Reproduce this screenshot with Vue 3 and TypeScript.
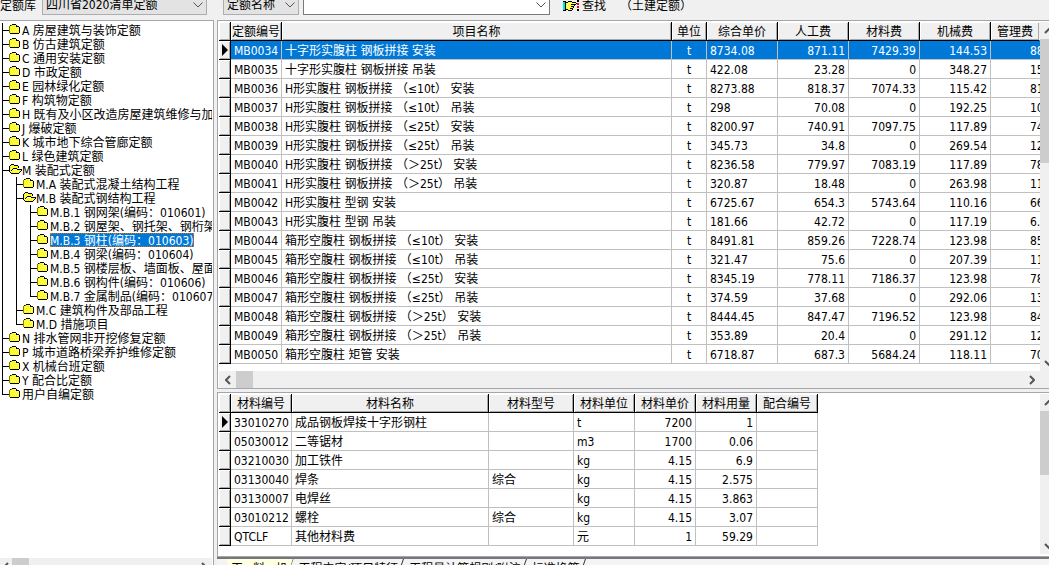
<script setup lang="ts">
import { ref } from 'vue'

interface TreeNode {
  label: string
  level: number
  open?: boolean
  last?: boolean
}

const tree: TreeNode[] = [
  { label: 'A 房屋建筑与装饰定额', level: 0 },
  { label: 'B 仿古建筑定额', level: 0 },
  { label: 'C 通用安装定额', level: 0 },
  { label: 'D 市政定额', level: 0 },
  { label: 'E 园林绿化定额', level: 0 },
  { label: 'F 构筑物定额', level: 0 },
  { label: 'H 既有及小区改造房屋建筑维修与加固', level: 0 },
  { label: 'J 爆破定额', level: 0 },
  { label: 'K 城市地下综合管廊定额', level: 0 },
  { label: 'L 绿色建筑定额', level: 0 },
  { label: 'M 装配式定额', level: 0, open: true },
  { label: 'M.A 装配式混凝土结构工程', level: 1 },
  { label: 'M.B 装配式钢结构工程', level: 1, open: true },
  { label: 'M.B.1 钢网架(编码：010601)', level: 2 },
  { label: 'M.B.2 钢屋架、钢托架、钢桁架', level: 2 },
  { label: 'M.B.3 钢柱(编码：010603)', level: 2 },
  { label: 'M.B.4 钢梁(编码：010604)', level: 2 },
  { label: 'M.B.5 钢楼层板、墙面板、屋面板', level: 2 },
  { label: 'M.B.6 钢构件(编码：010606)', level: 2 },
  { label: 'M.B.7 金属制品(编码：010607)', level: 2, last: true },
  { label: 'M.C 建筑构件及部品工程', level: 1 },
  { label: 'M.D 措施项目', level: 1, last: true },
  { label: 'N 排水管网非开挖修复定额', level: 0 },
  { label: 'P 城市道路桥梁养护维修定额', level: 0 },
  { label: 'X 机械台班定额', level: 0 },
  { label: 'Y 配合比定额', level: 0 },
  { label: '用户自编定额', level: 0, last: true },
]

const quotaHeads = ['定额编号', '项目名称', '单位', '综合单价', '人工费', '材料费', '机械费', '管理费']
const quotas: string[][] = [
  ['MB0034', '十字形实腹柱 钢板拼接 安装', 't', '8734.08', '871.11', '7429.39', '144.53', '88'],
  ['MB0035', '十字形实腹柱 钢板拼接 吊装', 't', '422.08', '23.28', '0', '348.27', '15'],
  ['MB0036', 'H形实腹柱 钢板拼接 （≤10t） 安装', 't', '8273.88', '818.37', '7074.33', '115.42', '81'],
  ['MB0037', 'H形实腹柱 钢板拼接 （≤10t） 吊装', 't', '298', '70.08', '0', '192.25', '10'],
  ['MB0038', 'H形实腹柱 钢板拼接 （≤25t） 安装', 't', '8200.97', '740.91', '7097.75', '117.89', '74'],
  ['MB0039', 'H形实腹柱 钢板拼接 （≤25t） 吊装', 't', '345.73', '34.8', '0', '269.54', '12'],
  ['MB0040', 'H形实腹柱 钢板拼接 （＞25t） 安装', 't', '8236.58', '779.97', '7083.19', '117.89', '78'],
  ['MB0041', 'H形实腹柱 钢板拼接 （＞25t） 吊装', 't', '320.87', '18.48', '0', '263.98', '11'],
  ['MB0042', 'H形实腹柱 型钢 安装', 't', '6725.67', '654.3', '5743.64', '110.16', '66'],
  ['MB0043', 'H形实腹柱 型钢 吊装', 't', '181.66', '42.72', '0', '117.19', '6.'],
  ['MB0044', '箱形空腹柱 钢板拼接 （≤10t） 安装', 't', '8491.81', '859.26', '7228.74', '123.98', '85'],
  ['MB0045', '箱形空腹柱 钢板拼接 （≤10t） 吊装', 't', '321.47', '75.6', '0', '207.39', '11'],
  ['MB0046', '箱形空腹柱 钢板拼接 （≤25t） 安装', 't', '8345.19', '778.11', '7186.37', '123.98', '78'],
  ['MB0047', '箱形空腹柱 钢板拼接 （≤25t） 吊装', 't', '374.59', '37.68', '0', '292.06', '13'],
  ['MB0048', '箱形空腹柱 钢板拼接 （＞25t） 安装', 't', '8444.45', '847.47', '7196.52', '123.98', '84'],
  ['MB0049', '箱形空腹柱 钢板拼接 （＞25t） 吊装', 't', '353.89', '20.4', '0', '291.12', '12'],
  ['MB0050', '箱形空腹柱 矩管 安装', 't', '6718.87', '687.3', '5684.24', '118.11', '70'],
]

const materialHeads = ['材料编号', '材料名称', '材料型号', '材料单位', '材料单价', '材料用量', '配合编号']
const materials: string[][] = [
  ['33010270', '成品钢板焊接十字形钢柱', '', 't', '7200', '1', ''],
  ['05030012', '二等锯材', '', 'm3', '1700', '0.06', ''],
  ['03210030', '加工铁件', '', 'kg', '4.15', '6.9', ''],
  ['03130040', '焊条', '综合', 'kg', '4.15', '2.575', ''],
  ['03130007', '电焊丝', '', 'kg', '4.15', '3.863', ''],
  ['03010212', '螺栓', '综合', 'kg', '4.15', '3.07', ''],
  ['QTCLF', '其他材料费', '', '元', '1', '59.29', ''],
]

const tabs = ['工   料   机', '工程内容/项目特征', '工程量计算规则/附注', '标准换算']

const selectedNode = ref(15)
const selectedQuota = ref(0)
const selectedMaterial = ref(0)
const activeTab = ref(0)
const keyword = ref('')
</script>

<template>
  <div class="window">
    <header class="toolbar">
      <label class="lib-label" for="library">定额库</label>
      <span class="combo combo-lib">
        <select id="library"><option>四川省2020清单定额</option></select>
        <svg class="chev" viewBox="0 0 10 6"><path d="M.5.5 5 5 9.500.5" /></svg>
      </span>
      <span class="combo combo-field">
        <select aria-label="查找字段"><option>定额名称</option></select>
        <svg class="chev" viewBox="0 0 10 6"><path d="M.5.5 5 5 9.500.5" /></svg>
      </span>
      <span class="combo combo-key">
        <input v-model="keyword" type="text" aria-label="查找内容" />
        <svg class="chev" viewBox="0 0 10 6"><path d="M.5.5 5 5 9.500.5" /></svg>
      </span>
      <button class="find" type="button">
        <svg class="hand" viewBox="0 0 17 12" shape-rendering="crispEdges">
          <path fill="#00e0e0" d="M0 2h2v8H0z" />
          <path fill="#000" d="M0 1h3v1H0zM0 10h3v1H0zM2 2h1v8H2z" />
          <path fill="#ffff30" d="M3 3h2V2h4v1h4v1H9v1h2v1h-1v2h-1v2H5V9H3z" />
          <path fill="#fff" d="M4 4h1v1H4zM6 3h1v1H6zM4 6h1v1H4zM6 5h1v1H6zM6 7h1v1H6zM8 3h1v1H8zM10 3h1v1h-1z" />
          <path fill="#000" d="M3 2h2v1H3zM5 1h4v1H5zM9 2h4v1H9zM13 3h1v1h-1zM8 4h5v1H8zM11 5h1v1h-1zM8 6h3v1H8zM10 7h1v1h-1zM7 8h3v1H7zM9 9h1v1H9zM5 10h4v1H5zM3 9h2v1H3z" />
          <path fill="#000" d="M14 0h2v2h-2zM14 9h2v2h-2z" />
          <path fill="#e00" d="M14 3h2v2h-2zM14 6h2v2h-2z" />
        </svg>
        查找
      </button>
      <span class="scope">（土建定额）</span>
    </header>

    <main class="body">
      <aside class="side">
        <ul class="tree">
          <li
            v-for="(n, i) in tree"
            :key="n.label"
            :class="['node', { selected: i === selectedNode, last: n.last }]"
            @click="selectedNode = i"
          >
            <span v-for="k in n.level" :key="k" class="rail"></span>
            <span class="branch"></span>
            <svg v-if="n.open" class="folder" viewBox="0 0 13 12">
              <path fill="#ff0" d="M1 3h1V2h3v1h4v3H3v1H2v2H1zM4 7h8v1h-1v1h-1v1H2V9h1V8h1z" />
              <path fill="#fff" d="M2 3h1v1H2zM4 4h1v1H4zM6 4h1v1H6zM2 5h1v1H2zM5 8h1v1H5zM7 7h1v1H7zM9 8h1v1H9z" />
              <path
                fill="#000"
                d="M2 1h3v1H2zM1 2h1v1H1zM5 2h4v1H5zM9 3h1v2H9zM0 3h1v6H0zM4 5h4v1H4zM3 6h1v1H3zM8 6h5v1H8zM2 7h1v1H2zM12 7h1v1h-1zM11 8h1v1h-1zM1 9h1v1H1zM10 9h1v1h-1zM2 10h8v1H2z"
              />
            </svg>
            <svg v-else class="folder" viewBox="0 0 13 12">
              <path fill="#ff0" d="M1 3h9v7H1zM3 2h3v1H3z" />
              <path
                fill="#fff"
                d="M2 4h1v1H2zM4 4h1v1H4zM6 4h1v1H6zM8 4h1v1H8zM3 6h1v1H3zM5 6h1v1H5zM7 6h1v1H7zM9 6h1v1H9zM2 8h1v1H2zM4 8h1v1H4zM6 8h1v1H6zM8 8h1v1H8z"
              />
              <path fill="#808000" d="M2 2h1v1H2zM0 3h1v7H0z" />
              <path fill="#000" d="M3 1h4v1H3zM7 2h1v1H7zM1 2h1v1H1zM7 3h3v1H7zM10 4h1v6h-1zM1 10h9v1H1z" />
            </svg>
            <span class="label">{{ n.label }}</span>
          </li>
        </ul>
        <div class="hbar">
          <button type="button" class="arrow arrow-cut" aria-label="向左">
            <svg viewBox="0 0 6 10"><path d="M5 1 1 5l4 4" /></svg>
          </button>
          <span class="thumb thumb-h"></span>
          <span class="track"></span>
          <button type="button" class="arrow" aria-label="向右">
            <svg viewBox="0 0 6 10"><path d="M1 1l4 4-4 4" /></svg>
          </button>
        </div>
      </aside>

      <section class="content">
        <div class="panel quota-panel">
          <div class="sheet">
            <table class="grid quota">
              <colgroup>
                <col class="w-mark" /><col class="w-code" /><col class="w-name" /><col class="w-unit" />
                <col class="w-num" /><col class="w-num" /><col class="w-num" /><col class="w-num" /><col class="w-tail" />
              </colgroup>
              <thead>
                <tr>
                  <th></th>
                  <th v-for="h in quotaHeads" :key="h">{{ h }}</th>
                </tr>
              </thead>
              <tbody>
                <tr
                  v-for="(row, r) in quotas"
                  :key="row[0]"
                  :class="{ selected: r === selectedQuota }"
                  @click="selectedQuota = r"
                >
                  <th><svg v-if="r === selectedQuota" class="mark" viewBox="0 0 6 12"><path d="M0 0l6 6-6 6z" /></svg></th>
                  <td v-for="(v, c) in row" :key="c">{{ v }}</td>
                </tr>
              </tbody>
            </table>
          </div>
          <div class="vbar">
            <button type="button" class="arrow" aria-label="向上">
              <svg viewBox="0 0 10 6"><path d="M1 5l4-4 4 4" /></svg>
            </button>
            <span class="thumb thumb-tall"></span>
            <span class="track"></span>
            <button type="button" class="arrow" aria-label="向下">
              <svg viewBox="0 0 10 6"><path d="M1 1l4 4 4-4" /></svg>
            </button>
          </div>
          <div class="hbar">
            <button type="button" class="arrow" aria-label="向左">
              <svg viewBox="0 0 6 10"><path d="M5 1 1 5l4 4" /></svg>
            </button>
            <span class="thumb thumb-h"></span>
            <span class="track"></span>
            <button type="button" class="arrow" aria-label="向右">
              <svg viewBox="0 0 6 10"><path d="M1 1l4 4-4 4" /></svg>
            </button>
          </div>
          <div class="corner"></div>
        </div>

        <div class="panel material-panel">
          <div class="sheet">
            <table class="grid material">
              <colgroup>
                <col class="w-mark" /><col class="w-mid" /><col class="w-mname" /><col class="w-model" />
                <col class="w-mid" /><col class="w-mid" /><col class="w-mid" /><col class="w-mid" />
              </colgroup>
              <thead>
                <tr>
                  <th></th>
                  <th v-for="h in materialHeads" :key="h">{{ h }}</th>
                </tr>
              </thead>
              <tbody>
                <tr v-for="(row, r) in materials" :key="row[0]" @click="selectedMaterial = r">
                  <th><svg v-if="r === selectedMaterial" class="mark" viewBox="0 0 6 12"><path d="M0 0l6 6-6 6z" /></svg></th>
                  <td v-for="(v, c) in row" :key="c">{{ v }}</td>
                </tr>
              </tbody>
            </table>
          </div>
          <div class="vbar">
            <button type="button" class="arrow" aria-label="向上">
              <svg viewBox="0 0 10 6"><path d="M1 5l4-4 4 4" /></svg>
            </button>
            <span class="thumb thumb-short"></span>
            <span class="track"></span>
            <button type="button" class="arrow" aria-label="向下">
              <svg viewBox="0 0 10 6"><path d="M1 1l4 4 4-4" /></svg>
            </button>
          </div>
        </div>

        <nav class="tabs">
          <button
            v-for="(t, i) in tabs"
            :key="t"
            type="button"
            :class="['tab', { active: i === activeTab }]"
            @click="activeTab = i"
          >{{ t }}</button>
        </nav>
      </section>
    </main>
  </div>
</template>

<style>
body {
  margin: 0;
  background: #f0f0f0;
}
</style>

<style scoped>
* {
  box-sizing: border-box;
}

.window,
button,
input,
select {
  font-family: 'DejaVu Sans Condensed', 'Noto Sans CJK SC', sans-serif;
  font-size: 12px;
  color: #000;
}

.window {
  display: flex;
  flex-direction: column;
  height: 100vh;
  overflow: hidden;
  background: #f0f0f0;
}

button {
  padding: 0;
  border: 0;
  background: none;
}

/* toolbar */
.toolbar {
  display: flex;
  align-items: flex-end;
  flex: 0 0 20px;
  height: 20px;
  padding-bottom: 5px;
  overflow: hidden;
  line-height: 18px;
  white-space: nowrap;
}

.lib-label {
  width: 42px;
}

.combo {
  position: relative;
  height: 22px;
}

.combo-lib {
  width: 165px;
  margin-right: 16px;
}

.combo-field {
  width: 76px;
  margin-right: 4px;
}

.combo-key {
  width: 247px;
  margin-right: 13px;
}

.combo select,
.combo input {
  display: block;
  width: 100%;
  height: 22px;
  margin: 0;
  padding: 2px 3px 0;
  border: 1px solid #adadad;
  border-radius: 0;
  appearance: none;
  background: #e3e3e3;
  line-height: 18px;
}

.combo input {
  border-color: #7a7a7a;
  background: #fff;
}

.chev {
  position: absolute;
  right: 4px;
  bottom: 7px;
  width: 10px;
  height: 6px;
  fill: none;
  stroke: #555;
  pointer-events: none;
}

.find {
  display: flex;
  align-items: center;
  gap: 2px;
  height: 18px;
  line-height: 18px;
}

.hand {
  width: 17px;
  height: 12px;
}

.scope {
  margin-left: 14px;
}

/* layout */
.body {
  display: flex;
  flex: 1;
  min-height: 0;
}

.side {
  display: flex;
  flex-direction: column;
  flex: 0 0 214px;
  min-width: 0;
  margin-right: 3px;
  padding-right: 1px;
  overflow: hidden;
  border-top: 1px solid #a5a5ab;
  border-right: 1px solid #a5a5ab;
  background: #fff;
}

.content {
  display: flex;
  flex-direction: column;
  flex: 1;
  min-width: 0;
  margin-right: -8px;
}

/* tree */
.tree {
  flex: 1;
  min-height: 0;
  margin: 0;
  padding: 2px 0 0 2px;
  overflow: hidden;
  list-style: none;
}

.node {
  display: flex;
  height: 14px;
  line-height: 16px;
  white-space: pre;
}

.rail {
  flex: 0 0 14px;
  border-left: 1px solid #000;
}

.branch {
  display: flex;
  flex-direction: column;
  flex: 0 0 7px;
}

.branch::before {
  content: '';
  height: 7px;
  border-bottom: 1px solid #000;
  border-left: 1px solid #000;
}

.branch::after {
  content: '';
  height: 7px;
  border-left: 1px solid #000;
}

.last .branch::after {
  border-left: 0;
}

.folder {
  flex: 0 0 13px;
  width: 13px;
  height: 12px;
  fill: none;
  shape-rendering: crispEdges;
}

.selected .label {
  outline: 1px dotted #e07000;
  outline-offset: -1px;
  background: #0078d7;
  color: #fff;
}

/* scroll bars */
.hbar {
  display: flex;
  height: 17px;
  background: #f0f0f0;
}

.side .hbar {
  flex: 0 0 7px;
  overflow: hidden;
  height: 7px;
}

.vbar {
  display: flex;
  flex-direction: column;
  width: 17px;
  background: #f0f0f0;
}

.track {
  flex: 1;
}

.thumb {
  background: #cdcdcd;
}

.thumb-h {
  width: 17px;
}

.thumb-tall {
  height: 124px;
}

.thumb-short {
  height: 64px;
}

.arrow {
  display: flex;
  align-items: center;
  justify-content: center;
  flex: 0 0 17px;
  height: 17px;
}

.arrow-cut {
  flex-basis: 12px;
}

.arrow svg {
  width: 10px;
  height: 10px;
  fill: none;
  stroke: #555;
  stroke-width: 2;
}

.hbar .arrow svg {
  width: 6px;
}

.vbar .arrow svg {
  height: 6px;
}

.corner {
  background: #f0f0f0;
}

/* grids */
.panel {
  display: grid;
  grid-template-columns: minmax(0, 1fr) 17px;
  padding: 1px 0 0 1px;
  border: 1px solid #a5a5ab;
  border-right: 0;
  background: #fff;
}

.quota-panel {
  margin-bottom: 3px;
}

.quota-panel .sheet {
  padding-bottom: 7px;
}

.material-panel {
  flex: 1;
  min-height: 0;
  padding-bottom: 2px;
}

.sheet {
  min-width: 0;
  overflow: hidden;
}

.grid {
  border-spacing: 0;
  table-layout: fixed;
}

.quota {
  width: 821px;
}

.material {
  width: 599px;
}

.w-mark { width: 12px; }
.w-code { width: 51px; }
.w-name { width: 390px; }
.w-unit { width: 35px; }
.w-num { width: 71px; }
.w-tail { width: 49px; }
.w-mid { width: 61px; }
.w-mname { width: 197px; }
.w-model { width: 85px; }

th,
td {
  height: 19px;
  padding: 0;
  overflow: hidden;
  font-weight: normal;
  line-height: 16px;
  white-space: pre;
}

th {
  padding-top: 2px;
  border-right: 1px solid #000;
  border-bottom: 1px solid #000;
  background: #f0f0f0;
  box-shadow: inset 1px 1px #fff, inset -1px -1px #a8a8a8;
  text-align: center;
}

tbody th {
  padding-top: 0;
}

.quota thead th:last-child {
  border-right-color: #f0f0f0;
}

td {
  padding: 2px 3px 0;
  border-right: 1px solid #c0c0c0;
  border-bottom: 1px solid #c0c0c0;
}

.quota td:nth-child(4) {
  text-align: center;
}

.quota td:nth-child(n + 6),
.material td:nth-child(6),
.material td:nth-child(7) {
  text-align: right;
}

.quota td:last-child {
  padding: 2px 0 0 39px;
  border-right: 0;
  text-align: left;
}

.quota .selected td {
  background: #0078d7;
  color: #fff;
}

.mark {
  display: block;
  width: 6px;
  height: 12px;
  margin-left: 3px;
}

/* bottom tabs */
.tabs {
  display: flex;
  flex: 0 0 8px;
  height: 8px;
  padding-left: 9px;
  overflow: hidden;
  border-top: 2px solid #77777b;
  background: #f4f4f4;
}

.tab {
  position: relative;
  height: 20px;
  padding: 0 6px 0 5px;
  line-height: 18px;
  white-space: pre;
}

.tab::after {
  content: '';
  position: absolute;
  top: 0;
  right: 0;
  width: 1px;
  height: 20px;
  background: #333;
  transform: skewX(-20deg);
  transform-origin: top;
}

.tab.active {
  clip-path: polygon(0 0, 100% 0, calc(100% - 8px) 100%, 8px 100%);
  background: #ffffe1;
}
</style>
